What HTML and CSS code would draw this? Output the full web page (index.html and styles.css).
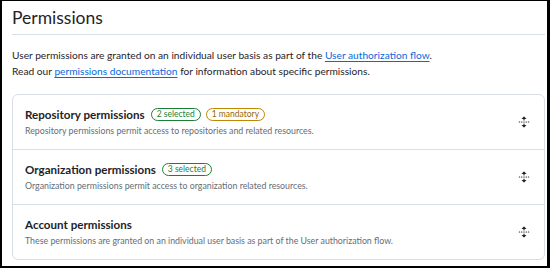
FILE: index.html
```html
<!DOCTYPE html>
<html>
<head>
<meta charset="utf-8">
<link rel="stylesheet" href="styles.css">
</head>
<body>
<div class="frame">
  <h2 class="title">Permissions</h2>
  <p class="intro">User permissions are granted on an individual user basis as part of the <a href="#">User authorization flow</a>.<br>Read our <a href="#">permissions documentation</a> for information about specific permissions.</p>
  <div class="box">
    <div class="row">
      <div class="info">
        <div class="head"><span class="name">Repository permissions</span><span class="badge green">2 selected</span><span class="badge orange">1 mandatory</span></div>
        <div class="desc">Repository permissions permit access to repositories and related resources.</div>
      </div>
      <svg class="icon" viewBox="0 0 16 16" width="12" height="12"><path d="m8.177.677 2.896 2.896a.25.25 0 0 1-.177.427H8.75v1.25a.75.75 0 0 1-1.5 0V4H5.104a.25.25 0 0 1-.177-.427L7.823.677a.25.25 0 0 1 .354 0ZM7.25 10.75a.75.75 0 0 1 1.5 0V12h2.146a.25.25 0 0 1 .177.427l-2.896 2.896a.25.25 0 0 1-.354 0l-2.896-2.896A.25.25 0 0 1 5.104 12H7.25v-1.25Zm-5-2a.75.75 0 0 0 0-1.5h-.5a.75.75 0 0 0 0 1.5h.5ZM6 8a.75.75 0 0 1-.75.75h-.5a.75.75 0 0 1 0-1.5h.5A.75.75 0 0 1 6 8Zm2.25.75a.75.75 0 0 0 0-1.5h-.5a.75.75 0 0 0 0 1.5h.5ZM12 8a.75.75 0 0 1-.75.75h-.5a.75.75 0 0 1 0-1.5h.5A.75.75 0 0 1 12 8Zm2.25.75a.75.75 0 0 0 0-1.5h-.5a.75.75 0 0 0 0 1.5h.5Z"/></svg>
    </div>
    <div class="row">
      <div class="info">
        <div class="head"><span class="name">Organization permissions</span><span class="badge green">3 selected</span></div>
        <div class="desc">Organization permissions permit access to organization related resources.</div>
      </div>
      <svg class="icon" viewBox="0 0 16 16" width="12" height="12"><path d="m8.177.677 2.896 2.896a.25.25 0 0 1-.177.427H8.75v1.25a.75.75 0 0 1-1.5 0V4H5.104a.25.25 0 0 1-.177-.427L7.823.677a.25.25 0 0 1 .354 0ZM7.25 10.75a.75.75 0 0 1 1.5 0V12h2.146a.25.25 0 0 1 .177.427l-2.896 2.896a.25.25 0 0 1-.354 0l-2.896-2.896A.25.25 0 0 1 5.104 12H7.25v-1.25Zm-5-2a.75.75 0 0 0 0-1.5h-.5a.75.75 0 0 0 0 1.5h.5ZM6 8a.75.75 0 0 1-.75.75h-.5a.75.75 0 0 1 0-1.5h.5A.75.75 0 0 1 6 8Zm2.25.75a.75.75 0 0 0 0-1.5h-.5a.75.75 0 0 0 0 1.5h.5ZM12 8a.75.75 0 0 1-.75.75h-.5a.75.75 0 0 1 0-1.5h.5A.75.75 0 0 1 12 8Zm2.25.75a.75.75 0 0 0 0-1.5h-.5a.75.75 0 0 0 0 1.5h.5Z"/></svg>
    </div>
    <div class="row">
      <div class="info">
        <div class="head"><span class="name">Account permissions</span></div>
        <div class="desc">These permissions are granted on an individual user basis as part of the User authorization flow.</div>
      </div>
      <svg class="icon" viewBox="0 0 16 16" width="12" height="12"><path d="m8.177.677 2.896 2.896a.25.25 0 0 1-.177.427H8.75v1.25a.75.75 0 0 1-1.5 0V4H5.104a.25.25 0 0 1-.177-.427L7.823.677a.25.25 0 0 1 .354 0ZM7.25 10.75a.75.75 0 0 1 1.5 0V12h2.146a.25.25 0 0 1 .177.427l-2.896 2.896a.25.25 0 0 1-.354 0l-2.896-2.896A.25.25 0 0 1 5.104 12H7.25v-1.25Zm-5-2a.75.75 0 0 0 0-1.5h-.5a.75.75 0 0 0 0 1.5h.5ZM6 8a.75.75 0 0 1-.75.75h-.5a.75.75 0 0 1 0-1.5h.5A.75.75 0 0 1 6 8Zm2.25.75a.75.75 0 0 0 0-1.5h-.5a.75.75 0 0 0 0 1.5h.5ZM12 8a.75.75 0 0 1-.75.75h-.5a.75.75 0 0 1 0-1.5h.5A.75.75 0 0 1 12 8Zm2.25.75a.75.75 0 0 0 0-1.5h-.5a.75.75 0 0 0 0 1.5h.5Z"/></svg>
    </div>
  </div>
</div>
</body>
</html>
```

FILE: styles.css
```css
html, body {
  margin: 0;
  padding: 0;
  background: #000;
}
body {
  width: 550px;
  height: 268px;
  overflow: hidden;
  font-family: Lato, "Noto Sans", sans-serif;
  color: #1f2328;
}
.frame {
  box-sizing: border-box;
  width: 545px;
  height: 265px;
  margin: 1px 0 0 2px;
  background: #fff;
  padding: 0 2px 0 10px;
}
.title {
  margin: 0;
  padding: 8px 0 7px;
  font-size: 17.5px;
  font-weight: 400;
  line-height: 18px;
  border-bottom: 1px solid #d8dee4;
}
.intro {
  margin: 12px 0 0;
  font-size: 10.2px;
  line-height: 16px;
}
.intro a {
  color: #0969da;
  text-decoration: underline;
  text-underline-offset: 2px;
}
.box {
  margin-top: 15px;
  border: 1px solid #d8dee4;
  border-radius: 6px;
}
.row {
  display: flex;
  align-items: center;
  justify-content: space-between;
  height: 54px;
  padding: 0 14px 0 12px;
  border-top: 1px solid #d8dee4;
}
.row:first-child {
  border-top: 0;
}
.head {
  display: flex;
  align-items: center;
  gap: 5px;
}
.name {
  font-size: 11.6px;
  font-weight: 700;
  line-height: 17px;
  margin-right: 1px;
}
.badge {
  font-size: 8.5px;
  line-height: 11px;
  padding: 0 5px;
  border: 1px solid;
  border-radius: 8px;
  font-weight: 400;
}
.green { color: #1a7f37; border-color: #1a7f37; }
.orange { color: #9a6700; border-color: #bf8700; }
.desc {
  font-size: 8.8px;
  line-height: 15px;
  color: #656d76;
}
.icon {
  fill: #1f2328;
  flex: none;
}
```
